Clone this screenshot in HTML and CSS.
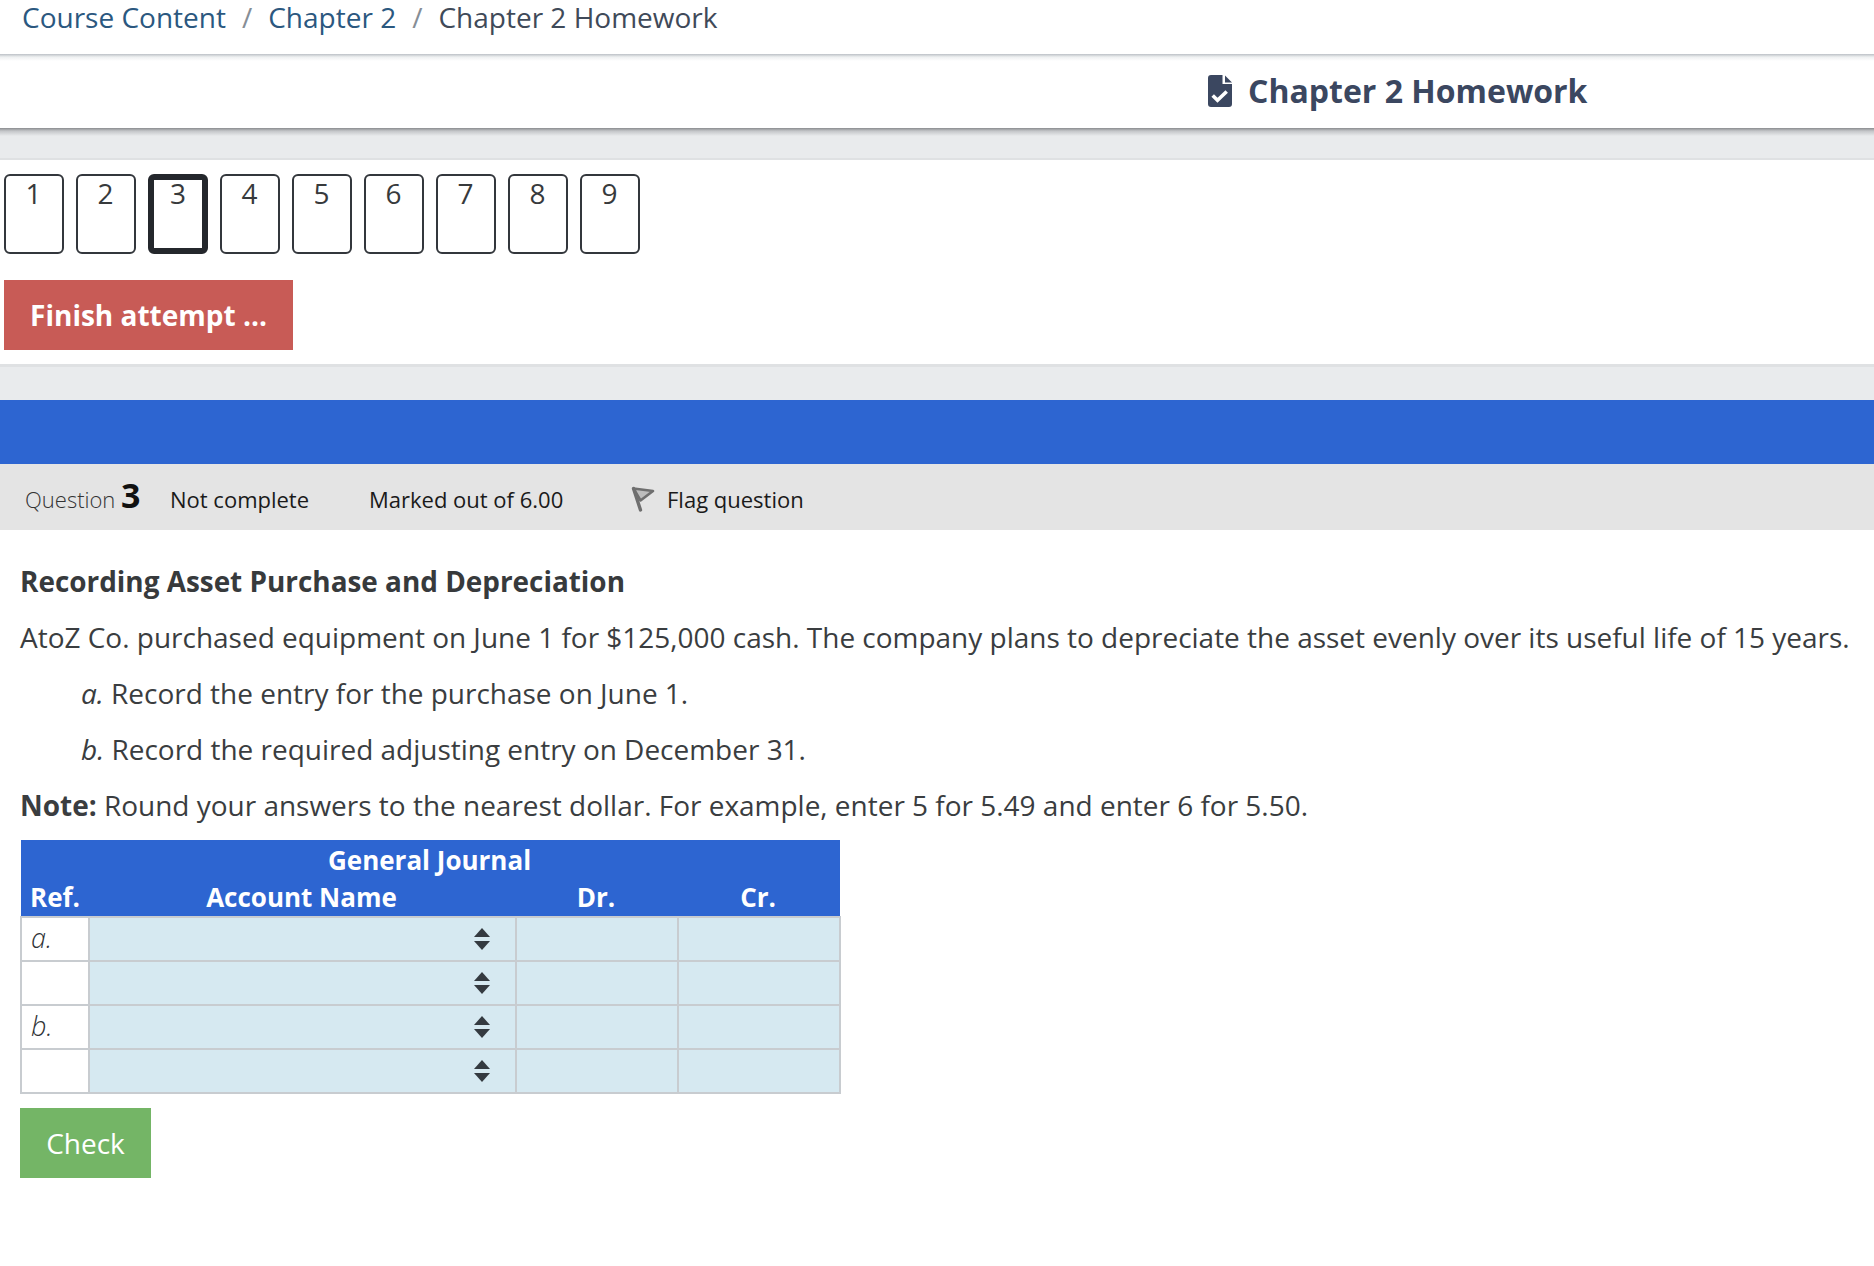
FILE: index.html
```html
<!DOCTYPE html>
<html lang="en">
<head>
<meta charset="utf-8">
<title>Chapter 2 Homework</title>
<link rel="stylesheet" href="styles.css">
</head>
<body>
<nav class="crumbs">
  <a class="crumb-link">Course Content</a><span class="sep">/</span><a class="crumb-link">Chapter 2</a><span class="sep">/</span><span class="crumb-current">Chapter 2 Homework</span>
</nav>
<header class="title-bar">
  <svg class="doc-icon" viewBox="0 0 24 32"><path fill="#3b4760" d="M3 0H14.5V9H24V29a3 3 0 0 1-3 3H3a3 3 0 0 1-3-3V3a3 3 0 0 1 3-3Z"/><path fill="#3b4760" d="M17 0.5 24 7.5H17Z"/><path fill="none" stroke="#fff" stroke-width="3.6" d="M4.7 20.5 9.5 25.2 18.7 16.5"/></svg>
  <h1 class="title">Chapter 2 Homework</h1>
</header>
<div class="spacer spacer-top"></div>
<section class="quiz-nav">
  <div class="pages">
    <span class="page">1</span><span class="page">2</span><span class="page current">3</span><span class="page">4</span><span class="page">5</span><span class="page">6</span><span class="page">7</span><span class="page">8</span><span class="page">9</span>
  </div>
  <button class="finish">Finish attempt ...</button>
</section>
<div class="spacer spacer-mid"></div>
<div class="blue-bar"></div>
<div class="q-info">
  <span class="q-no">Question <b>3</b></span>
  <span class="q-state">Not complete</span>
  <span class="q-mark">Marked out of 6.00</span>
  <svg class="flag" viewBox="0 0 24 26"><path fill="#bdbdbd" stroke="#6f6f6f" stroke-width="2.6" stroke-linejoin="round" d="M2.5 2.5 22 5 9.5 14.5Z"/><path fill="none" stroke="#6f6f6f" stroke-width="3.4" stroke-linecap="round" d="M2.5 2.5 9.5 24"/></svg>
  <span class="q-flag">Flag question</span>
</div>
<main class="content">
  <h2 class="q-title">Recording Asset Purchase and Depreciation</h2>
  <p class="line">AtoZ Co. purchased equipment on June 1 for $125,000 cash. The company plans to depreciate the asset evenly over its useful life of 15 years.</p>
  <p class="line indent"><i>a.</i> Record the entry for the purchase on June 1.</p>
  <p class="line indent"><i>b.</i> Record the required adjusting entry on December 31.</p>
  <p class="line"><b>Note:</b> Round your answers to the nearest dollar. For example, enter 5 for 5.49 and enter 6 for 5.50.</p>
  <table class="journal">
    <colgroup><col class="c-ref"><col class="c-acc"><col class="c-amt"><col class="c-amt"></colgroup>
    <thead>
      <tr><th colspan="4" class="th-top">General Journal</th></tr>
      <tr class="th-cols"><th class="th-ref">Ref.</th><th>Account Name</th><th>Dr.</th><th>Cr.</th></tr>
    </thead>
    <tbody>
      <tr><td class="ref"><i>a.</i></td><td class="sel"><span class="updown"></span></td><td></td><td></td></tr>
      <tr><td class="ref"></td><td class="sel"><span class="updown"></span></td><td></td><td></td></tr>
      <tr><td class="ref"><i>b.</i></td><td class="sel"><span class="updown"></span></td><td></td><td></td></tr>
      <tr><td class="ref"></td><td class="sel"><span class="updown"></span></td><td></td><td></td></tr>
    </tbody>
  </table>
  <button class="check">Check</button>
</main>
</body>
</html>
```
FILE: styles.css
```css
* { box-sizing: border-box; }
html, body { margin: 0; padding: 0; background: #fff; height: 1266px; overflow: hidden; }
body { font-family: "Open Sans", "Noto Sans", sans-serif; color: #373a3c; }

.crumbs { height: 54px; padding: 0 0 20px 22px; display: flex; align-items: center; font-size: 28px; line-height: 36px; color: #3c4858; }
.crumb-link { color: #2b587f; }
.crumb-current { color: #3f4a59; }
.sep { color: #868e96; margin: 0 16px; }

.title-bar { height: 74px; display: flex; align-items: center; padding-left: 1208px; gap: 16px; background: linear-gradient(#bcc1c6, #eef0f1 3px, #fff 7px); }
.doc-icon { width: 24px; height: 32px; flex: none; }
.title { margin: 0; font-size: 32px; line-height: 40px; font-weight: 700; color: #3b4760; }

.spacer { background: #e9ebed; }
.spacer-top { height: 32px; border-bottom: 2px solid #dfe1e3; background: linear-gradient(#8a8c8f, #c3c5c8 3px, #e9ebed 8px); }
.spacer-mid { height: 36px; border-top: 3px solid #dfe1e3; }

.quiz-nav { height: 204px; padding: 14px 0 0 4px; }
.pages { display: flex; gap: 12px; }
.page { width: 60px; height: 80px; border: 2px solid #33373c; border-radius: 6px; text-align: center; font-size: 28px; line-height: 34px; padding-right: 1px; color: #373a3c; }
.page.current { border-width: 6px; border-color: #24272c; line-height: 26px; padding-right: 0; }
.finish { display: block; margin-top: 26px; width: 289px; height: 70px; padding: 0; border: 0; background: #c85b56; color: #fff; font: 700 28px/70px "Open Sans", sans-serif; }

.blue-bar { height: 64px; background: #2d65d1; }

.q-info { height: 66px; background: #e4e4e4; display: flex; align-items: center; padding: 3px 0 0 25px; font-size: 22px; color: #1a1a1a; }
.q-no { font-weight: 300; width: 145px; color: #333; white-space: nowrap; margin-bottom: 4px; }
.q-no b { font-size: 34px; font-weight: 700; color: #111; line-height: 30px; }
.q-state { width: 199px; white-space: nowrap; }
.q-mark { width: 262px; white-space: nowrap; }
.flag { width: 24px; height: 26px; margin-right: 12px; flex: none; filter: blur(0.6px); }

.content { padding: 29px 0 0 20px; font-size: 27.97px; color: #3a3d40; }
.q-title { margin: 0; font-size: 27.9px; line-height: 44px; font-weight: 700; color: #373a3c; }
.line { margin: 12px 0 0; line-height: 44px; white-space: nowrap; }
.indent { padding-left: 61px; }
.journal { margin-top: 13px; width: 820px; border-collapse: collapse; table-layout: fixed; }
.c-ref { width: 68px; } .c-acc { width: 427px; } .c-amt { width: 162px; }
.journal th { background: #2d65d1; color: #fff; font-size: 26px; font-weight: 700; padding: 0 2px 0 0; line-height: 38px; }
.th-top { height: 39px; }
.th-cols th { height: 37px; line-height: 37px; }
.th-ref { text-align: left; padding-left: 9px !important; }
.journal td { height: 44px; padding: 0; border: 2px solid #c8ccd0; background: #d6e9f1; position: relative; }
.journal td.ref { background: #fff; font-size: 27px; padding: 0 0 2px 9px; font-weight: 300; line-height: 36px; color: #2f3336; }
.updown { position: absolute; left: 384px; top: 10px; width: 16px; height: 22px; display: block; }
.updown::before, .updown::after { content: ""; position: absolute; left: 0; border-left: 8px solid transparent; border-right: 8px solid transparent; }
.updown::before { top: 0; border-bottom: 9px solid #343a40; }
.updown::after { bottom: 0; border-top: 9px solid #343a40; }
.check { display: block; margin-top: 14px; width: 131px; height: 70px; border: 0; padding: 0; background: #74b566; color: #fff; font: 400 28px/70px "Open Sans", sans-serif; }
```
